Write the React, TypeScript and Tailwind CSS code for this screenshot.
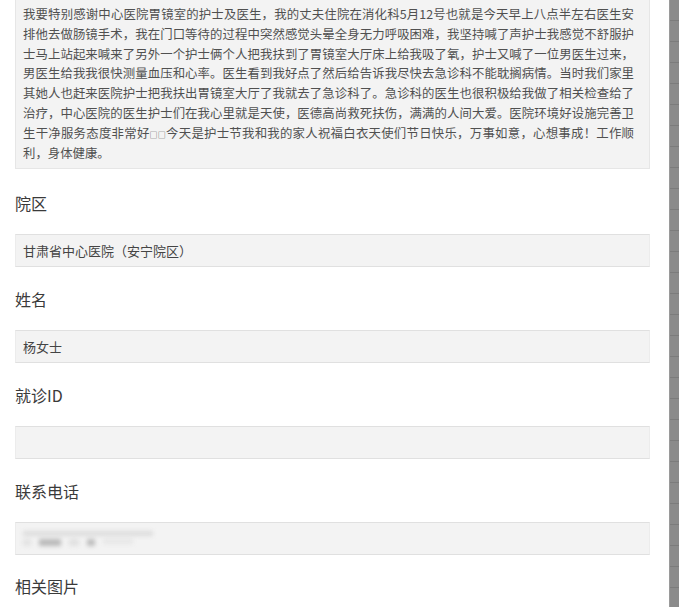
const story = [
  "我要特别感谢中心医院胃镜室的护士及医生，我的丈夫住院在消化科5月12号也就是今天早上八点半左右医生安",
  "排他去做肠镜手术，我在门口等待的过程中突然感觉头晕全身无力呼吸困难，我坚持喊了声护士我感觉不舒服护",
  "士马上站起来喊来了另外一个护士俩个人把我扶到了胃镜室大厅床上给我吸了氧，护士又喊了一位男医生过来，",
  "男医生给我我很快测量血压和心率。医生看到我好点了然后给告诉我尽快去急诊科不能耽搁病情。当时我们家里",
  "其她人也赶来医院护士把我扶出胃镜室大厅了我就去了急诊科了。急诊科的医生也很积极给我做了相关检查给了",
  "治疗，中心医院的医生护士们在我心里就是天使，医德高尚救死扶伤，满满的人间大爱。医院环境好设施完善卫",
];

function Field({ label, value, blurred }: { label: string; value?: string; blurred?: boolean }) {
  return (
    <div>
      <div className="h-[63px] flex items-center text-[16px] text-[#3a3a3a]">{label}</div>
      <div className="h-[33px] border border-[#e0e0e0] border-l-[#ececec] border-r-[#ececec] bg-[#f3f3f3] flex items-center px-[7px] text-[13px] text-[#444]">
        {value}
        {blurred && (
          <div className="flex flex-col gap-[3px] blur-[2px]">
            <div className="w-[130px] h-[5px] bg-[#dcdcdc]" />
            <div className="flex gap-[8px]">
              <div className="w-[8px] h-[7px] bg-[#e2e2e2]" />
              <div className="w-[22px] h-[7px] bg-[#b9b9b9]" />
              <div className="w-[10px] h-[7px] bg-[#e0e0e0]" />
              <div className="w-[8px] h-[7px] bg-[#bdbdbd]" />
              <div className="w-[30px] h-[5px] bg-[#e6e6e6]" />
            </div>
          </div>
        )}
      </div>
    </div>
  );
}

export default function App() {
  return (
    <div
      className="flex h-[607px] w-[679px] overflow-hidden bg-white"
      style={{ fontFamily: '"Noto Sans CJK SC", "Microsoft YaHei", sans-serif' }}
    >
      <div className="w-[669px] pl-[15px] pr-[19px]">
        <div className="h-[169px] border border-t-0 border-[#e6e6e6] bg-[#f3f3f3] pl-[7px] pr-[15px] pt-[5px] text-[12.4px] leading-[19.75px] text-[#505050]">
          {story.map((line) => (
            <div key={line} className="whitespace-nowrap [text-align-last:justify]">
              {line}
            </div>
          ))}
          <div className="whitespace-nowrap [text-align-last:justify]">
            生干净服务态度非常好<span className="text-[8px]">□□</span>今天是护士节我和我的家人祝福白衣天使们节日快乐，万事如意，心想事成！工作顺
          </div>
          <div>利，身体健康。</div>
        </div>

        <div className="mt-[2px]">
          <Field label="院区" value="甘肃省中心医院（安宁院区）" />
          <Field label="姓名" value="杨女士" />
          <Field label="就诊ID" />
          <Field label="联系电话" blurred />
          <div className="h-[61px] flex items-center text-[16px] text-[#3a3a3a]">相关图片</div>
        </div>
      </div>
      <div className="w-[10px] h-full border-l border-[#9a9a9a] bg-[repeating-linear-gradient(180deg,#8b8b8b_0px,#8b8b8b_20px,#7c7c7c_20px,#7c7c7c_21px)]" />
    </div>
  );
}
